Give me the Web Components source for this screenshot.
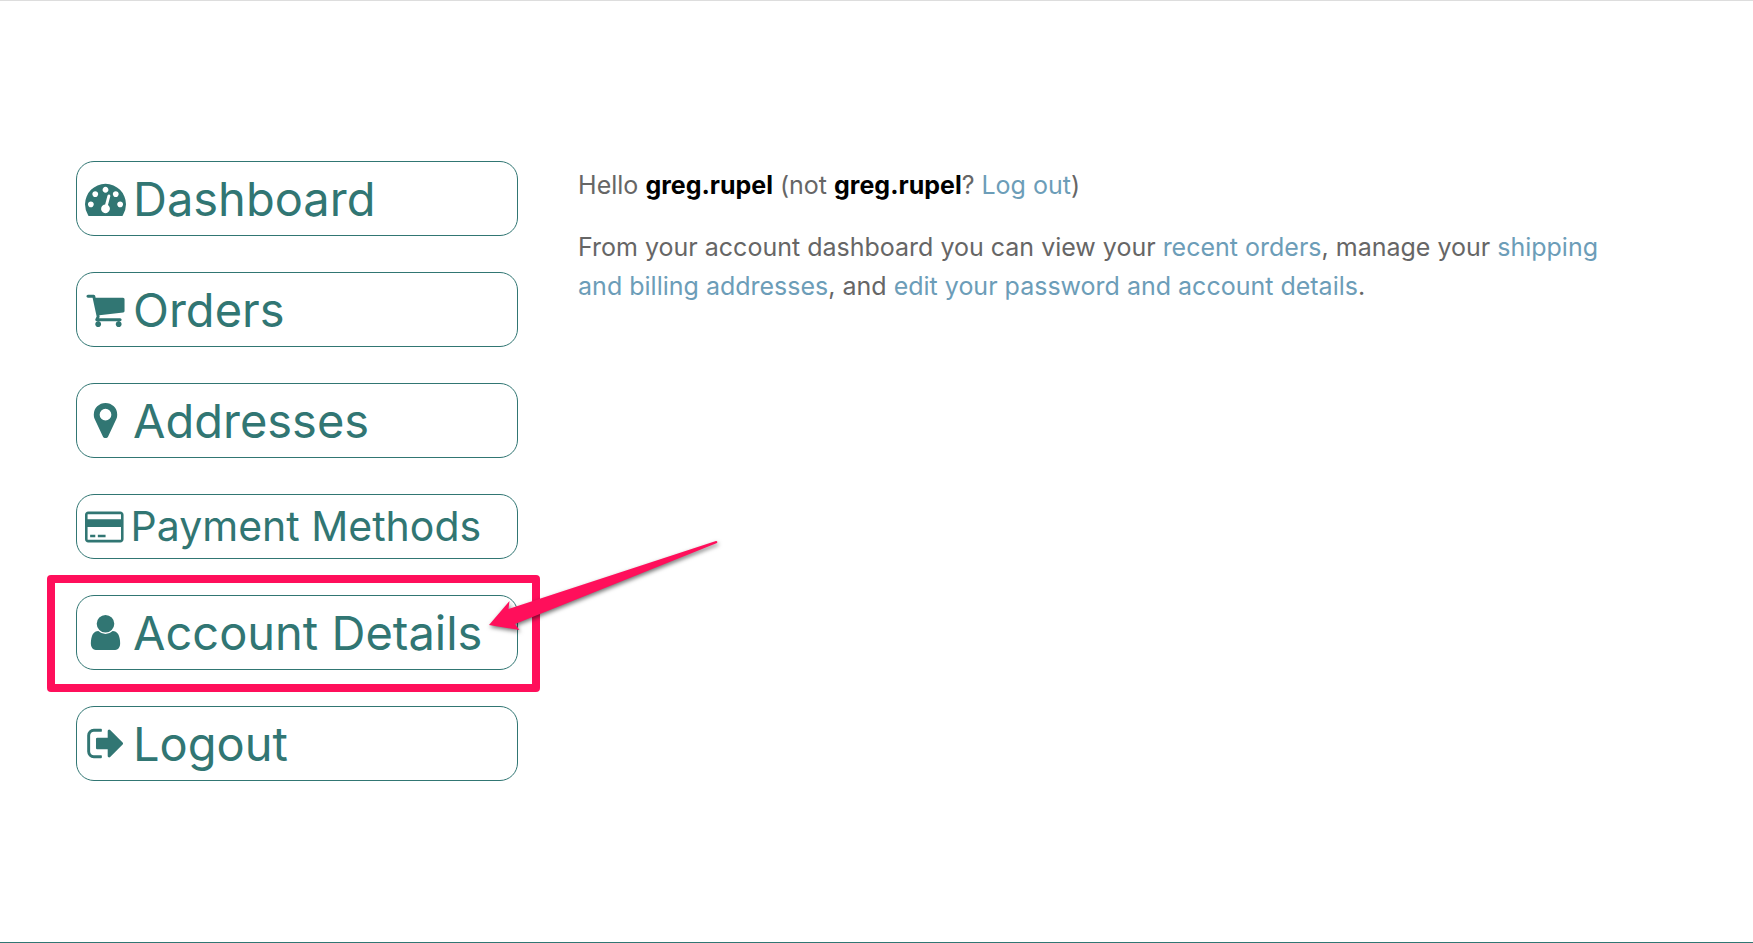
<!DOCTYPE html>
<html lang="en">
<head>
<meta charset="utf-8">
<meta name="viewport" content="width=device-width, initial-scale=1">
<title>My account</title>
<style>
    body {
        margin: 0;
        background: #fff;
        color: #666;
        font-family: Inter, "Noto Sans", sans-serif;
    }
</style>
</head>
<body>
<account-page>
    <account-nav slot="nav">
        <account-nav-item icon="dashboard" href="#dashboard">Dashboard</account-nav-item>
        <account-nav-item icon="cart" href="#orders">Orders</account-nav-item>
        <account-nav-item icon="marker" href="#addresses">Addresses</account-nav-item>
        <account-nav-item icon="card" href="#payment-methods" compact>Payment Methods</account-nav-item>
        <account-callout>
            <account-nav-item icon="user" href="#account-details">Account Details</account-nav-item>
        </account-callout>
        <account-nav-item icon="logout" href="#logout">Logout</account-nav-item>
    </account-nav>
    <account-welcome user="greg.rupel"></account-welcome>
</account-page>

<script>
const ICONS = {
    dashboard: {
        box: '0 0 1792 1792',
        path: 'M384 1152q0-53-37.5-90.5t-90.5-37.5-90.5 37.5-37.5 90.5 37.5 90.5 90.5 37.5 90.5-37.5 37.5-90.5zm192-448q0-53-37.5-90.5t-90.5-37.5-90.5 37.5-37.5 90.5 37.5 90.5 90.5 37.5 90.5-37.5 37.5-90.5zm428 481l101-382q6-26-7.5-48.5t-38.5-29.5-48 6.5-30 39.5l-101 382q-60 5-107 43.5t-63 98.5q-20 77 20 146t117 89 146-20 89-117q16-60-6-117t-72-91zm660-33q0-53-37.5-90.5t-90.5-37.5-90.5 37.5-37.5 90.5 37.5 90.5 90.5 37.5 90.5-37.5 37.5-90.5zm-640-640q0-53-37.5-90.5t-90.5-37.5-90.5 37.5-37.5 90.5 37.5 90.5 90.5 37.5 90.5-37.5 37.5-90.5zm448 192q0-53-37.5-90.5t-90.5-37.5-90.5 37.5-37.5 90.5 37.5 90.5 90.5 37.5 90.5-37.5 37.5-90.5zm320 448q0 261-141 483-19 29-54 29h-1402q-35 0-54-29-141-221-141-483 0-182 71-348t191-286 286-191 348-71 348 71 286 191 191 286 71 348z'
    },
    cart: {
        box: '0 0 1792 1792',
        path: 'M704 1536q0 52-38 90t-90 38-90-38-38-90 38-90 90-38 90 38 38 90zm896 0q0 52-38 90t-90 38-90-38-38-90 38-90 90-38 90 38 38 90zm128-1088v512q0 24-16.5 42.5t-40.5 21.5l-1044 122q13 60 13 70 0 16-24 64h920q26 0 45 19t19 45-19 45-45 19h-1024q-26 0-45-19t-19-45q0-11 8-31.5t16-36 21.5-40 15.5-29.5l-177-823h-204q-26 0-45-19t-19-45 19-45 45-19h256q16 0 28.5 6.5t19.5 15.5 13 24.5 8 26 5.5 29.5 4.5 26h1201q26 0 45 19t19 45z'
    },
    marker: {
        box: '0 0 1792 1792',
        path: 'M1152 640q0-106-75-181t-181-75-181 75-75 181 75 181 181 75 181-75 75-181zm256 0q0 109-33 179l-364 774q-16 33-47.5 52t-67.5 19-67.5-19-46.5-52l-365-774q-33-70-33-179 0-212 150-362t362-150 362 150 150 362z'
    },
    card: {
        box: '0 0 1920 1792',
        path: 'M1760 128q66 0 113 47t47 113v1216q0 66-47 113t-113 47h-1600q-66 0-113-47t-47-113v-1216q0-66 47-113t113-47h1600zm-1600 128q-13 0-22.5 9.5t-9.5 22.5v224h1664v-224q0-13-9.5-22.5t-22.5-9.5h-1600zm1600 1280q13 0 22.5-9.5t9.5-22.5v-608h-1664v608q0 13 9.5 22.5t22.5 9.5h1600zm-1504-128v-128h256v128h-256zm384 0v-128h384v128h-384z'
    },
    user: {
        box: '0 0 1792 1792',
        path: 'M1536 1399q0 109-62.5 187t-150.5 78h-854q-88 0-150.5-78t-62.5-187q0-85 8.5-160.5t31.5-152 58.5-131 94-89 134.5-34.5q131 128 313 128t313-128q76 0 134.5 34.5t94 89 58.5 131 31.5 152 8.5 160.5zm-256-887q0 159-112.5 271.5t-271.5 112.5-271.5-112.5-112.5-271.5 112.5-271.5 271.5-112.5 271.5 112.5 112.5 271.5z'
    },
    logout: {
        box: '-32 0 1792 1792',
        path: 'M704 1440q0 4 1 20t.5 26.5-3 23.5-10 19.5-20.5 6.5h-320q-119 0-203.5-84.5t-84.5-203.5v-704q0-119 84.5-203.5t203.5-84.5h320q13 0 22.5 9.5t9.5 22.5q0 4 1 20t.5 26.5-3 23.5-10 19.5-20.5 6.5h-320q-66 0-113 47t-47 113v704q0 66 47 113t113 47h312l11.5 1 11.5 3 8 5.5 7 9 2 13.5zm928-544q0 26-19 45l-544 544q-19 19-45 19t-45-19-19-45v-288h-448q-26 0-45-19t-19-45v-384q0-26 19-45t45-19h448v-288q0-26 19-45t45-19 45 19l544 544q19 19 19 45z'
    }
};

class AccountPage extends HTMLElement {
    connectedCallback() {
        this.attachShadow({ mode: 'open' });
        this.shadowRoot.innerHTML = `
            <style>
                :host {
                    display: block;
                    box-sizing: border-box;
                    min-height: 100vh;
                    border-top: 1px solid #ddd;
                    border-bottom: 1px solid #317673;
                }
                main {
                    display: grid;
                    grid-template-columns: 35fr 87fr;
                    gap: 60px;
                    align-items: start;
                    padding: 160px 76px;
                }
                @media (max-width: 1100px) {
                    main {
                        grid-template-columns: 1fr;
                        padding: 60px 36px;
                    }
                }
            </style>
            <main>
                <slot name="nav"></slot>
                <slot></slot>
            </main>
        `;
    }
}

class AccountNav extends HTMLElement {
    connectedCallback() {
        this.attachShadow({ mode: 'open' });
        this.shadowRoot.innerHTML = `
            <style>
                :host {
                    display: block;
                }
                nav {
                    display: flex;
                    flex-direction: column;
                    gap: 36px;
                }
            </style>
            <nav aria-label="Account pages"><slot></slot></nav>
        `;
    }
}

class AccountNavItem extends HTMLElement {
    connectedCallback() {
        const icon = ICONS[this.getAttribute('icon')];
        this.attachShadow({ mode: 'open' });
        this.shadowRoot.innerHTML = `
            <style>
                :host {
                    display: block;
                    --size: 47px;
                    --icon: 41px;
                    --line: 73px;
                }
                :host([compact]) {
                    --size: 41px;
                    --icon: 36px;
                    --line: 63px;
                }
                a {
                    display: flex;
                    align-items: center;
                    gap: 7px;
                    padding: 0 8px;
                    border: 1px solid #317673;
                    border-radius: 18px;
                    color: #317673;
                    font-size: var(--size);
                    line-height: var(--line);
                    text-decoration: none;
                    white-space: nowrap;
                }
                svg {
                    flex: none;
                    height: var(--icon);
                    fill: currentColor;
                }
            </style>
            <a href="${this.getAttribute('href')}">
                <svg viewBox="${icon.box}" aria-hidden="true"><path d="${icon.path}"/></svg>
                <span><slot></slot></span>
            </a>
        `;
    }
}

// Pink frame and arrow drawn over the item it wraps
class AccountCallout extends HTMLElement {
    connectedCallback() {
        this.attachShadow({ mode: 'open' });
        this.shadowRoot.innerHTML = `
            <style>
                :host {
                    display: block;
                    position: relative;
                }
                .frame {
                    position: absolute;
                    inset: -20px -22px -22px -29px;
                    border: 8px solid #ff0f5b;
                    border-radius: 4px;
                    pointer-events: none;
                }
                .arrow {
                    position: absolute;
                    left: calc(100% - 38px);
                    top: -65px;
                    width: 250px;
                    height: 120px;
                    overflow: visible;
                    fill: #ff0f5b;
                    filter: drop-shadow(1px 2px 2px rgba(0, 0, 0, 0.55));
                    pointer-events: none;
                }
            </style>
            <slot></slot>
            <div class="frame"></div>
            <svg class="arrow" viewBox="0 0 250 120" aria-hidden="true">
                <path d="M9 95L29.500 71L28.500 79L236 11Q238 11 237 13L35 94L39.500 100Z"/>
            </svg>
        `;
    }
}

class AccountWelcome extends HTMLElement {
    connectedCallback() {
        const user = this.getAttribute('user');
        this.attachShadow({ mode: 'open' });
        this.shadowRoot.innerHTML = `
            <style>
                :host {
                    display: block;
                    padding: 5px 36px 0 0;
                    font-size: 25px;
                    line-height: 39px;
                }
                p {
                    margin: 0 0 23px;
                }
                strong {
                    color: #000;
                    font-weight: 700;
                }
                a {
                    color: #6c9db8;
                    text-decoration: none;
                }
            </style>
            <p>Hello <strong>${user}</strong> (not <strong>${user}</strong>? <a href="#logout">Log out</a>)</p>
            <p>From your account dashboard you can view your <a href="#orders">recent orders</a>, manage your <a href="#addresses">shipping and billing addresses</a>, and <a href="#account-details">edit your password and account details</a>.</p>
        `;
    }
}

customElements.define('account-page', AccountPage);
customElements.define('account-nav', AccountNav);
customElements.define('account-nav-item', AccountNavItem);
customElements.define('account-callout', AccountCallout);
customElements.define('account-welcome', AccountWelcome);
</script>
</body>
</html>
